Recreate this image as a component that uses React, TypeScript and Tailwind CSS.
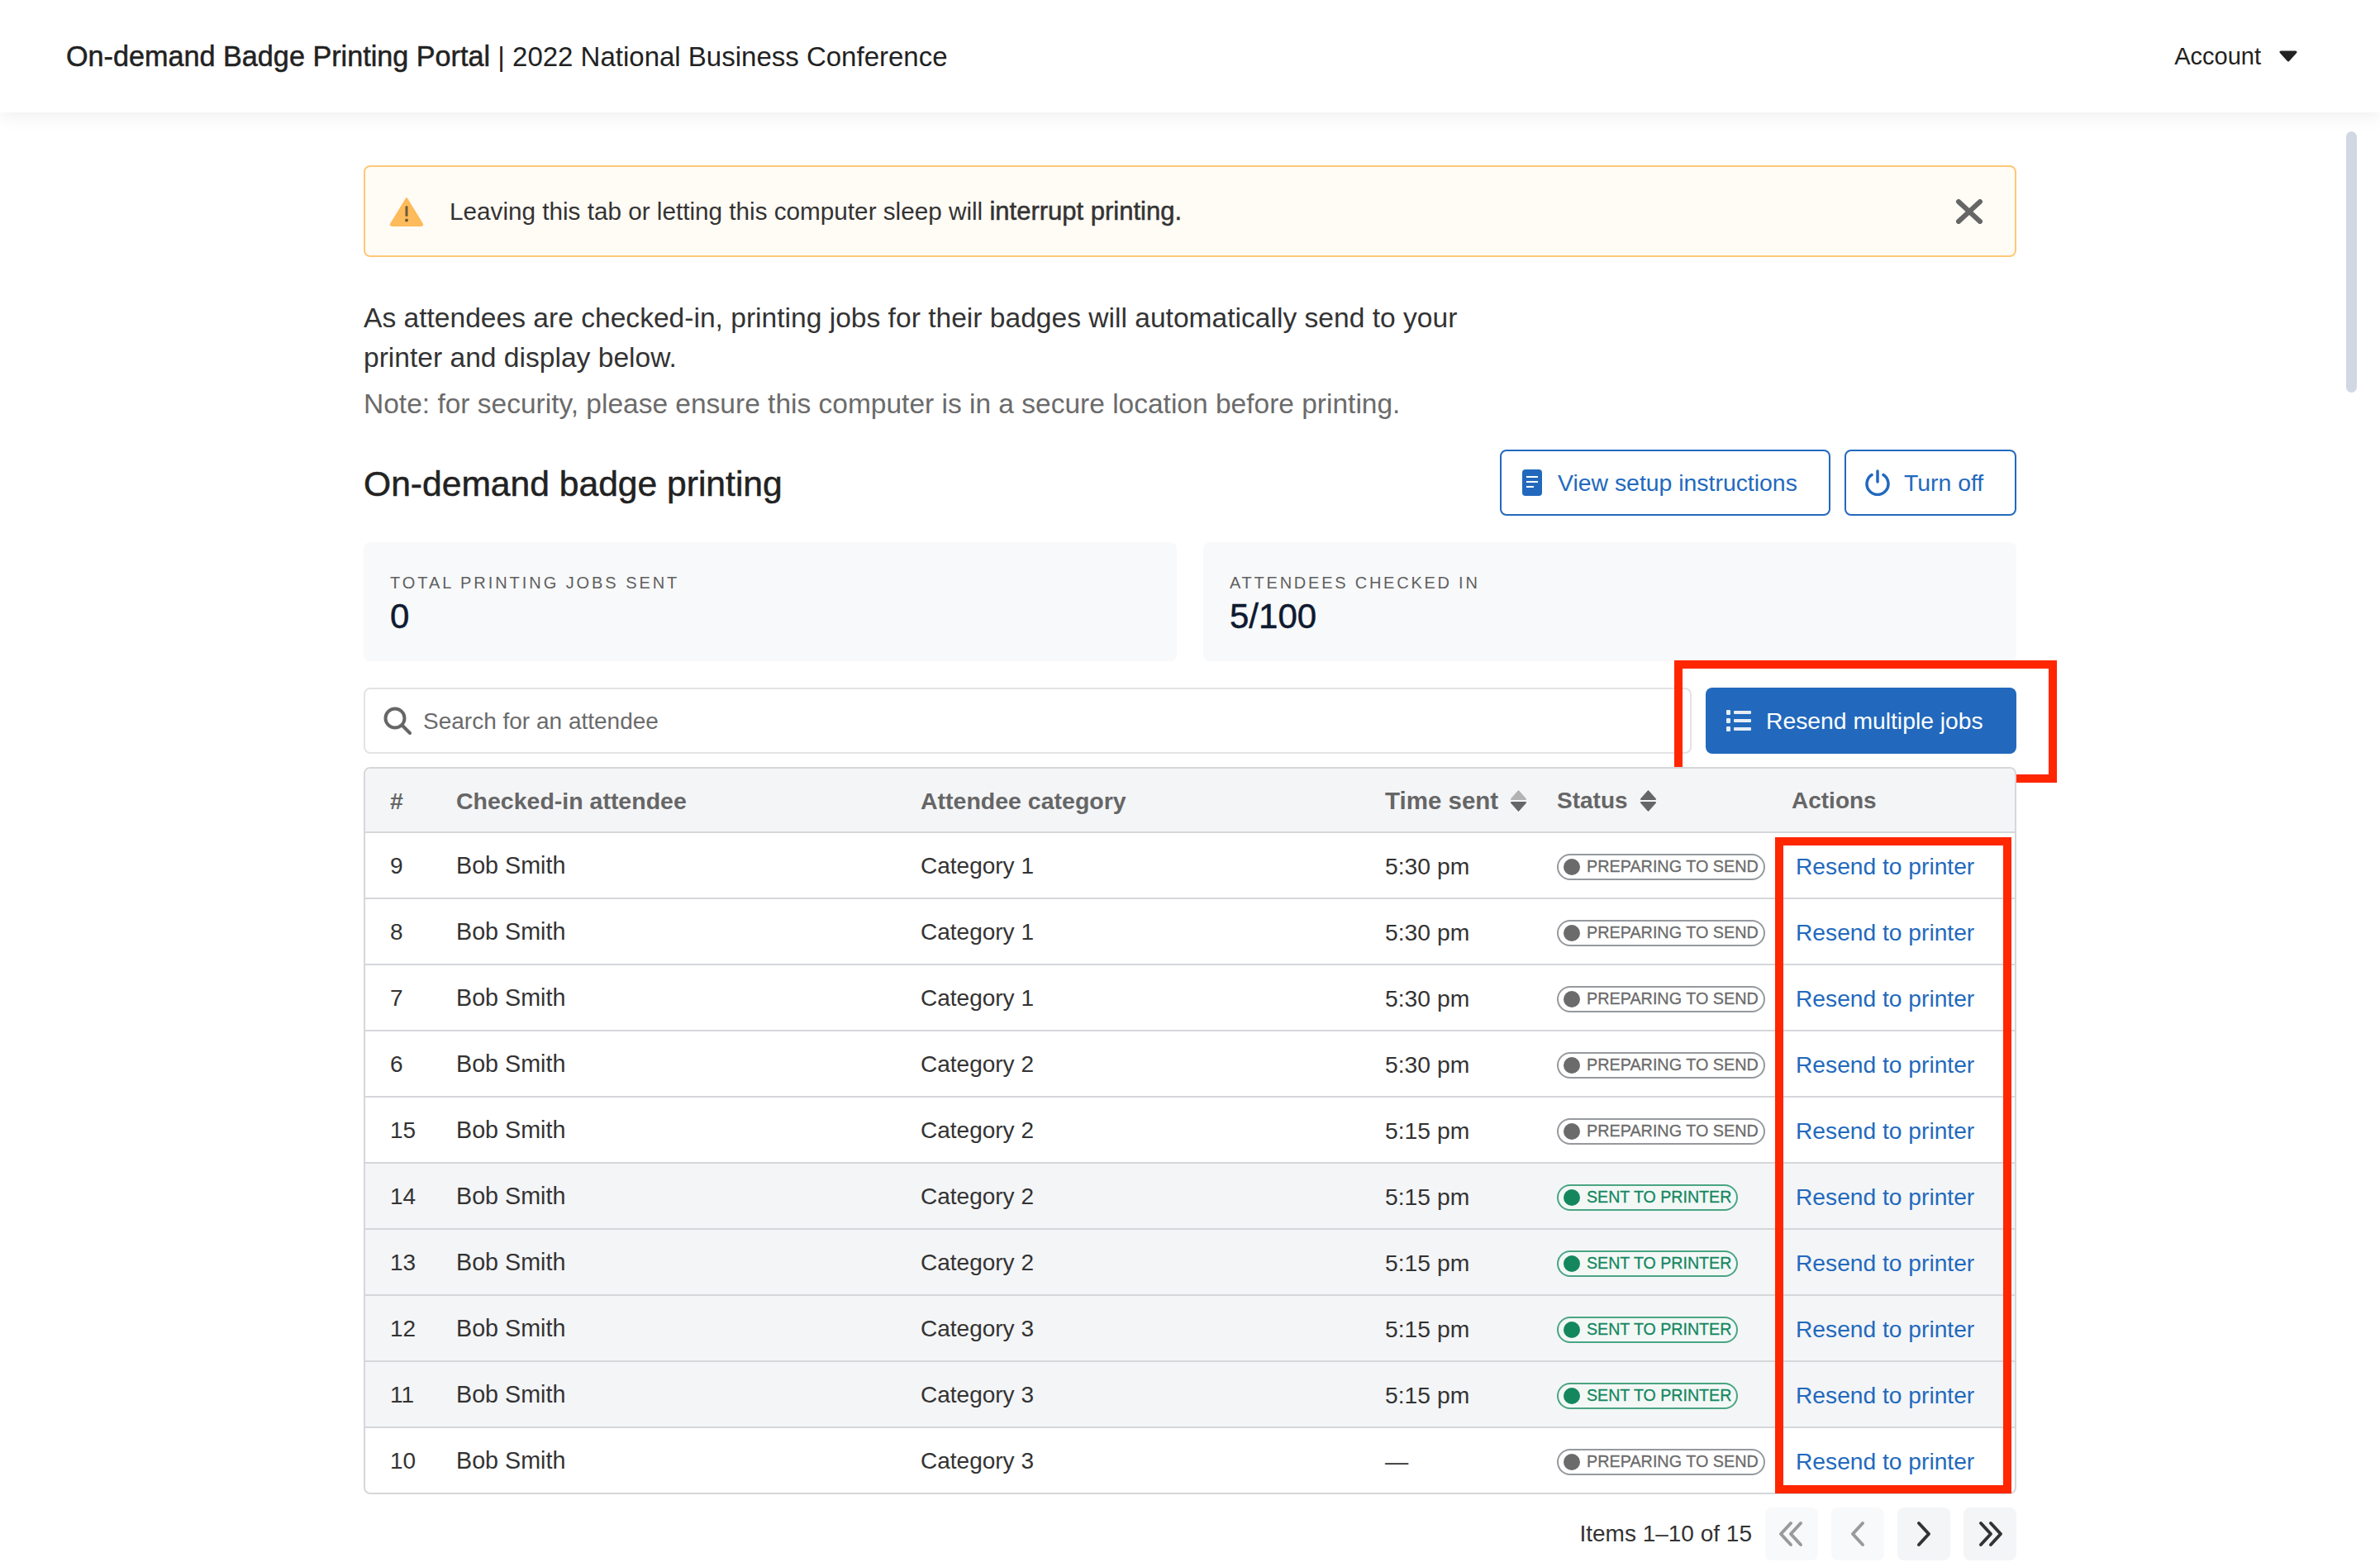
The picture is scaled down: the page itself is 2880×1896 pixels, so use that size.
import React from "react";

interface Job {
  id: number;
  category: number;
  time: string;
  sent: boolean;
}

const jobs: Job[] = [
  { id: 9, category: 1, time: "5:30 pm", sent: false },
  { id: 8, category: 1, time: "5:30 pm", sent: false },
  { id: 7, category: 1, time: "5:30 pm", sent: false },
  { id: 6, category: 2, time: "5:30 pm", sent: false },
  { id: 15, category: 2, time: "5:15 pm", sent: false },
  { id: 14, category: 2, time: "5:15 pm", sent: true },
  { id: 13, category: 2, time: "5:15 pm", sent: true },
  { id: 12, category: 3, time: "5:15 pm", sent: true },
  { id: 11, category: 3, time: "5:15 pm", sent: true },
  { id: 10, category: 3, time: "—", sent: false },
];

const rowGrid = "grid grid-cols-[80px_562px_562px_208px_284px_1fr] items-center pl-[30px]";
const medium = "[-webkit-text-stroke:0.5px_currentColor]";

function SortIcon({ upColor, downColor }: { upColor: string; downColor: string }) {
  return (
    <svg width="21" height="28" viewBox="0 0 21 28">
      <path d="M10.5 1.5 L19.5 11.5 Q20 12.5 19 12.5 L2 12.5 Q1 12.5 1.5 11.5 Z" fill={upColor} stroke={upColor} strokeLinejoin="round" />
      <path d="M10.5 26.5 L19.5 16.5 Q20 15.5 19 15.5 L2 15.5 Q1 15.5 1.5 16.5 Z" fill={downColor} stroke={downColor} strokeLinejoin="round" />
    </svg>
  );
}

function StatusBadge({ sent }: { sent: boolean }) {
  return (
    <span
      className={`inline-flex h-8 items-center rounded-full border-2 pl-[6px] pr-[6px] leading-none ${
        sent ? "border-[#4aa583] bg-[#f3f8f6] text-[19.6px] text-[#14875f]" : "border-[#96999e] bg-white text-[19.8px] text-[#6b6b6b]"
      }`}
    >
      <span className={`mr-2 h-5 w-5 rounded-full ${sent ? "bg-[#14875f]" : "bg-[#6b6b6b]"}`} />
      <span className="[-webkit-text-stroke:0.3px_currentColor]">{sent ? "SENT TO PRINTER" : "PREPARING TO SEND"}</span>
    </span>
  );
}

function PageButton({ path, color, bg }: { path: string; color: string; bg: string }) {
  return (
    <button className={`flex h-16 w-16 items-center justify-center rounded-lg ${bg}`}>
      <svg width="32" height="32" viewBox="0 0 32 32" fill="none" stroke={color} strokeWidth="4" strokeLinecap="round" strokeLinejoin="round">
        <path d={path} />
      </svg>
    </button>
  );
}

export default function App() {
  return (
    <div className="relative h-[1896px] overflow-hidden bg-white font-['Liberation_Sans',Arial,sans-serif] text-[#333]">
      {/* Header */}
      <header className="flex h-[136px] items-center justify-between pl-20 pr-[100px] shadow-[0_6px_20px_rgba(0,0,0,0.06)]">
        <div className="pt-[2px] text-[33px] text-[#222]">
          <span className={`text-[34.2px] ${medium}`}>On-demand Badge Printing Portal</span> | 2022 National Business Conference
        </div>
        <div className="flex items-center text-[29px] text-[#222]">
          <span className="pt-[2px]">Account</span>
          <svg className="ml-[22px]" width="22" height="14" viewBox="0 0 22 14">
            <path d="M2 2 H20 L11 12 Z" fill="#222" stroke="#222" strokeWidth="3" strokeLinejoin="round" />
          </svg>
        </div>
      </header>

      {/* Scrollbar */}
      <div className="absolute left-[2839px] top-[159px] h-[316px] w-[13px] rounded-full bg-[#d1d8e3]" />

      <main className="ml-[440px] w-[2000px] pt-16">
        {/* Alert */}
        <div className="flex h-[111px] items-center rounded-lg border-2 border-[#fdc878] bg-[#fffbf5] pl-[29px] pr-[38px]">
          <svg width="42" height="36" viewBox="0 0 42 36">
            <path d="M21 2 L40 33 Q40.5 35 38.5 35 L3.5 35 Q1.5 35 2 33 Z" fill="#fdbb5b" stroke="#fdbb5b" strokeWidth="2" strokeLinejoin="round" />
            <rect x="19.5" y="11" width="3" height="13" rx="1.5" fill="#6e5a36" />
            <circle cx="21" cy="28.5" r="2" fill="#6e5a36" />
          </svg>
          <p className="ml-[31px] flex-1 pt-[2px] text-[29.7px]">
            Leaving this tab or letting this computer sleep will <span className={`text-[31px] ${medium}`}>interrupt printing.</span>
          </p>
          <svg width="34" height="30" viewBox="0 0 34 30" fill="none" stroke="#666" strokeWidth="6" strokeLinecap="round">
            <path d="M4 3 L30 27 M30 3 L4 27" />
          </svg>
        </div>

        {/* Intro */}
        <p className="mt-[49px] w-[1340px] pt-px text-[33.6px] leading-[48px]">
          As attendees are checked-in, printing jobs for their badges will automatically send to your printer and display below.
        </p>
        <p className="mt-2 text-[33.5px] leading-[48px] text-[#6b6b6b]">
          Note: for security, please ensure this computer is in a secure location before printing.
        </p>

        {/* Title row */}
        <div className="mt-[31px] flex h-20 items-center justify-between">
          <h1 className={`pt-[3px] text-[42.6px] text-[#222] ${medium}`}>On-demand badge printing</h1>
          <div className="flex gap-[17px]">
            <button className="flex h-20 w-[400px] items-center rounded-lg border-2 border-[#2269bd] pl-[25px] text-[28.4px] text-[#2269bd]">
              <svg width="24" height="32" viewBox="0 0 24 32">
                <rect width="24" height="32" rx="4" fill="#2269bd" />
                <path d="M5 9 H19 M5 15 H19 M5 21 H14" stroke="#fff" strokeWidth="2" />
              </svg>
              <span className="ml-[19px] pt-px">View setup instructions</span>
            </button>
            <button className="flex h-20 w-[208px] items-center rounded-lg border-2 border-[#2269bd] pl-[22px] text-[28.4px] text-[#2269bd]">
              <svg width="32" height="32" viewBox="0 0 32 32" fill="none" stroke="#2269bd" strokeWidth="3.5" strokeLinecap="round">
                <path d="M16 2 V15" />
                <path d="M9 6.5 A13 13 0 1 0 23 6.5" />
              </svg>
              <span className="ml-[16px] pt-px">Turn off</span>
            </button>
          </div>
        </div>

        {/* Stats */}
        <div className="mt-[32px] grid grid-cols-2 gap-8">
          <div className="h-36 rounded-lg bg-[#f8f9fa] px-8 pt-[36px]">
            <div className="text-[20px] leading-[26px] tracking-[0.147em] text-[#5f5f5f]">TOTAL PRINTING JOBS SENT</div>
            <div className={`mt-1 text-[42px] leading-[48px] text-[#0e1a30] ${medium}`}>0</div>
          </div>
          <div className="h-36 rounded-lg bg-[#f8f9fa] px-8 pt-[36px]">
            <div className="text-[20px] leading-[26px] tracking-[0.138em] text-[#5f5f5f]">ATTENDEES CHECKED IN</div>
            <div className={`mt-1 text-[42px] leading-[48px] text-[#0e1a30] ${medium}`}>5/100</div>
          </div>
        </div>

        {/* Search + bulk action */}
        <div className="relative mt-[32px] flex h-20 gap-[17px]">
          <div className="flex flex-1 items-center rounded-lg border-2 border-[#e2e3e5] pl-[22px] text-[28px] text-[#6b6b6b]">
            <svg width="34" height="34" viewBox="0 0 34 34" fill="none" stroke="#666" strokeWidth="4" strokeLinecap="round">
              <circle cx="14" cy="14" r="11.5" />
              <path d="M23 23 L32 32" />
            </svg>
            <span className="ml-[14px] pt-[2px]">Search for an attendee</span>
          </div>
          <button className="flex w-[376px] items-center rounded-lg bg-[#2269bd] pl-[25px] text-[28.3px] text-white">
            <svg width="30" height="26" viewBox="0 0 30 26" fill="#e6edf6">
              <rect width="5" height="6" rx="1" />
              <rect y="10" width="5" height="6" rx="1" />
              <rect y="20" width="5" height="6" rx="1" />
              <rect x="9" y="1" width="21" height="4" rx="1" />
              <rect x="9" y="11" width="21" height="4" rx="1" />
              <rect x="9" y="21" width="21" height="4" rx="1" />
            </svg>
            <span className="ml-[18px] pt-px">Resend multiple jobs</span>
          </button>
          {/* Red annotation */}
          <div className="absolute left-[1586px] top-[-33px] h-[148px] w-[463px] border-[10px] border-[#ff2600]" />
        </div>

        {/* Table */}
        <div className="relative mt-4 rounded-lg border-2 border-[#d5d7da] text-[28px]">
          <div className={`${rowGrid} h-[78px] rounded-t-lg border-b-2 border-[#d5d7da] bg-[#f4f5f7] pt-[2px] text-[28.5px] font-bold text-[#666]`}>
            <div>#</div>
            <div>Checked-in attendee</div>
            <div>Attendee category</div>
            <div className="flex items-center gap-[14px] text-[29.5px]">
              Time sent <SortIcon upColor="#b3b3b3" downColor="#666" />
            </div>
            <div className="flex items-center gap-[14px] text-[28px]">
              Status <SortIcon upColor="#666" downColor="#666" />
            </div>
            <div className="text-[28px]">Actions</div>
          </div>
          {jobs.map((job, i) => (
            <div
              key={job.id}
              className={`${rowGrid} ${i < jobs.length - 1 ? "h-20 border-b-2 border-[#d5d7da]" : "h-[78px]"} ${job.sent ? "bg-[#f4f5f7]" : ""}`}
            >
              <div className="pt-[2px]">{job.id}</div>
              <div className="pt-[2px] text-[28.7px]">Bob Smith</div>
              <div className="pt-[2px]">Category {job.category}</div>
              <div className="pt-[2px] text-[28.3px]">{job.time}</div>
              <div className="flex items-center pt-[3px]">
                <StatusBadge sent={job.sent} />
              </div>
              <a className="pl-[5px] pt-[2px] text-[28.2px] text-[#2269bd]">Resend to printer</a>
            </div>
          ))}
          {/* Red annotation */}
          <div className="absolute left-[1706px] top-[83px] h-[794px] w-[286px] border-[10px] border-[#ff2600]" />
        </div>

        {/* Pagination */}
        <div className="mt-4 flex items-center justify-end gap-4">
          <span className="text-[28px] text-[#333]">Items 1–10 of 15</span>
          <PageButton path="M15 3 L3 16 L15 29 M27 3 L15 16 L27 29" color="#9a9a9a" bg="bg-[#f8f9fa]" />
          <PageButton path="M22 3 L10 16 L22 29" color="#9a9a9a" bg="bg-[#f8f9fa]" />
          <PageButton path="M10 3 L22 16 L10 29" color="#333" bg="bg-[#f4f5f7]" />
          <PageButton path="M5 3 L17 16 L5 29 M17 3 L29 16 L17 29" color="#333" bg="bg-[#f4f5f7]" />
        </div>
      </main>
    </div>
  );
}
